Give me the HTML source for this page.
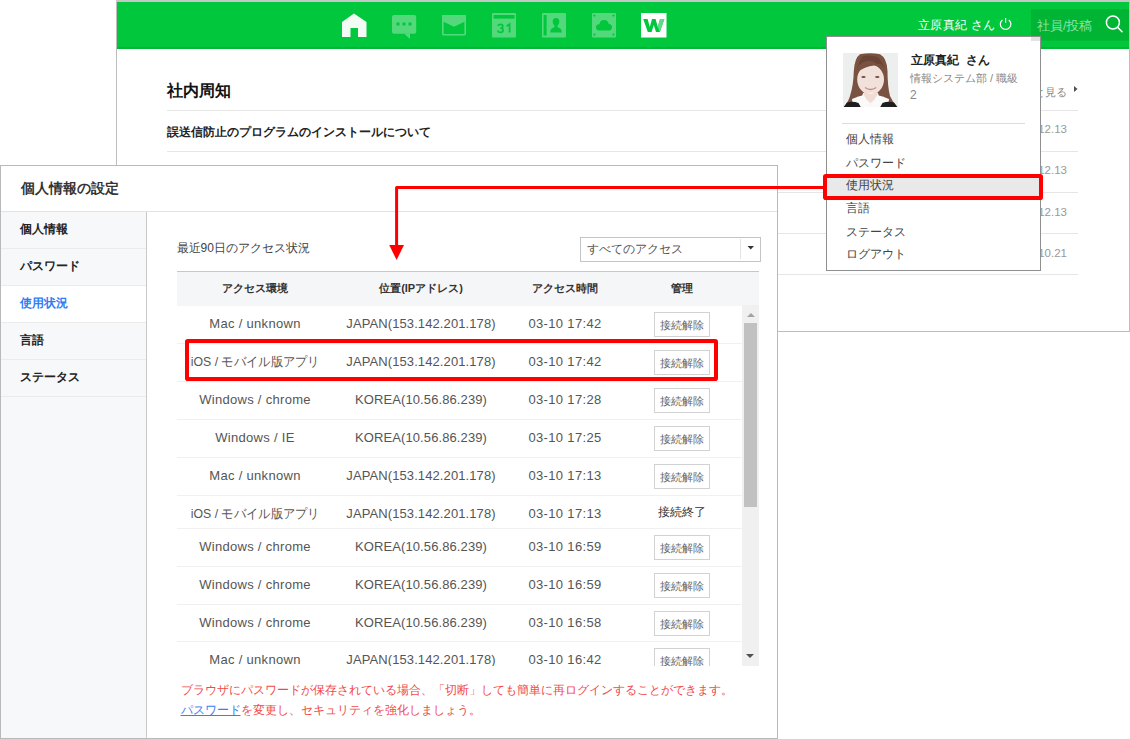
<!DOCTYPE html>
<html><head><meta charset="utf-8">
<style>
html,body{margin:0;padding:0;background:#fff;}
body{width:1130px;height:739px;position:relative;overflow:hidden;font-family:"Liberation Sans",sans-serif;}
.a{position:absolute;}
.t{position:absolute;white-space:nowrap;line-height:1;}
.hl{position:absolute;height:1px;background:#e6e6e6;}
</style></head>
<body>
<!-- ============ BACKGROUND WINDOW ============ -->
<div class="a" style="left:116px;top:0;width:1014px;height:332px;">
  <div class="a" style="left:0;top:0;width:1px;height:332px;background:#bdbdbd"></div>
  <div class="a" style="left:1013px;top:0;width:1px;height:332px;background:#bdbdbd"></div>
  <div class="a" style="left:0;top:0;width:1014px;height:2px;background:#c6c6c6"></div>
  <div class="a" style="left:0;top:331px;width:1014px;height:1px;background:#bdbdbd"></div>
</div>
<!-- green header -->
<div class="a" style="left:117px;top:2px;width:1012px;height:46.5px;background:#00c73c"></div>
<div class="a" style="left:117px;top:47px;width:1012px;height:1.5px;background:#00b836"></div>

<svg class="a" style="left:0;top:0" width="1130" height="50" viewBox="0 0 1130 50">
  <!-- home -->
  <path d="M342 22 L354 13.5 L366.5 22 L366.5 37 L358 37 L358 28 L350.5 28 L350.5 37 L342 37 Z" fill="#f3fbf5"/>
  <!-- chat -->
  <rect x="392" y="15" width="24.2" height="18.8" rx="2" fill="#53d97b"/>
  <path d="M404 33.4 L410 39 L410 33.4 Z" fill="#53d97b"/>
  <rect x="396.5" y="22.5" width="3" height="3" fill="#00c73c"/>
  <rect x="402.5" y="22.5" width="3" height="3" fill="#00c73c"/>
  <rect x="408.5" y="22.5" width="3" height="3" fill="#00c73c"/>
  <!-- mail -->
  <rect x="442.8" y="15.8" width="22.4" height="19" rx="0.8" fill="none" stroke="#53d97b" stroke-width="1.6"/>
  <path d="M442 15 L466 15 L466 21 L454 26.8 L442 21 Z" fill="#53d97b"/>
  <!-- calendar -->
  <rect x="492" y="13" width="24" height="24.5" rx="1" fill="#53d97b"/>
  <rect x="493.6" y="15" width="21" height="3.6" fill="#00c73c"/>
  <path d="M497.9 26 Q498.4 24.3 500.5 24.3 Q502.8 24.3 502.8 26.2 Q502.8 28.1 500.3 28.1 Q503.1 28.1 503.1 30.3 Q503.1 32.4 500.4 32.4 Q498.1 32.4 497.6 30.5" fill="none" stroke="#00c73c" stroke-width="1.7"/><path d="M506.6 26.2 L509.6 24.2 L509.6 32.6" fill="none" stroke="#00c73c" stroke-width="1.8"/>
  <!-- contacts -->
  <rect x="542" y="13" width="24" height="24.5" rx="1" fill="#53d97b"/>
  <rect x="543.6" y="15" width="3" height="20.5" fill="#00c73c"/>
  <ellipse cx="556" cy="21.7" rx="3.3" ry="3.7" fill="#00c73c"/><rect x="554.4" y="24" width="3.2" height="4" fill="#00c73c"/>
  <path d="M550.2 32.6 Q550.2 27.8 555 27.3 L557 27.3 Q561.8 27.8 561.8 32.6 Z" fill="#00c73c"/>
  <!-- drive -->
  <rect x="592" y="13" width="24" height="24.5" rx="1" fill="#53d97b"/>
  <circle cx="594.4" cy="15.6" r="1.1" fill="#00c73c"/>
  <circle cx="613.4" cy="15.6" r="1.1" fill="#00c73c"/>
  <circle cx="594.4" cy="34.6" r="1.1" fill="#00c73c"/>
  <circle cx="613.4" cy="34.6" r="1.1" fill="#00c73c"/>
  <path d="M599 30.4 Q596 30.4 596 27.3 Q596 24.3 599.3 24.3 Q600.2 20 604 20 Q608 20 608.8 24 Q612 24.2 612 27.3 Q612 30.4 609 30.4 Z" fill="#00c73c"/>
  <!-- W -->
  <rect x="641" y="13" width="25.5" height="24.5" fill="#ffffff"/>
  <path d="M643.2 19 L647.6 19 L649.8 27 L652 19 L655.6 19 L657.8 27 L660 19 L664.4 19 L659.8 32 L656 32 L653.8 25 L651.6 32 L647.8 32 Z" fill="#00c73c"/>
  <path d="M657.8 27 L660 19 L664.4 19 L659.8 32 Z" fill="#5fdb86"/>
  <!-- search box -->
  <rect x="1031" y="9" width="98" height="31.6" fill="#00b533"/>
  <circle cx="1112.9" cy="22.5" r="6.5" fill="none" stroke="#ffffff" stroke-width="1.5"/>
  <path d="M1117.6 27.2 L1122 31.7" stroke="#ffffff" stroke-width="1.6" stroke-linecap="round"/>
  <!-- power -->
  <path d="M1002.4 19.9 A5.3 5.3 0 1 0 1008.8 19.9" fill="none" stroke="#ffffff" stroke-width="1.2"/>
  <path d="M1005.6 18 L1005.6 22.8" stroke="#ffffff" stroke-width="1.2"/>
</svg>
<div class="t" style="left:918px;top:18.5px;font-size:12px;letter-spacing:0.3px;color:#fff">立原真紀 さん</div>
<div class="t" style="left:1037px;top:19.5px;font-size:12.5px;color:#8ee3a6">社員/投稿</div>

<!-- background content -->
<div class="t" style="left:166.5px;top:82.5px;font-size:16px;font-weight:bold;color:#111">社内周知</div>
<div class="hl" style="left:167px;top:110px;width:911px;"></div>
<div class="t" style="left:166.5px;top:126px;font-size:12px;font-weight:bold;color:#222">誤送信防止のプログラムのインストールについて</div>
<div class="hl" style="left:167px;top:151px;width:911px;"></div>
<div class="hl" style="left:167px;top:192px;width:911px;"></div>
<div class="hl" style="left:167px;top:233px;width:911px;"></div>
<div class="hl" style="left:167px;top:274px;width:911px;"></div>
<div class="t" style="left:1000px;top:86.8px;width:67px;text-align:right;font-size:11px;color:#888">もっと見る</div>
<svg class="a" style="left:1072px;top:85.2px" width="8" height="8"><path d="M2 1 L5.5 4 L2 7 Z" fill="#505050"/></svg>
<div class="t" style="left:990px;top:124px;width:77px;text-align:right;font-size:11.5px;color:#999">2017.12.13</div>
<div class="t" style="left:990px;top:165px;width:77px;text-align:right;font-size:11.5px;color:#999">2017.12.13</div>
<div class="t" style="left:990px;top:207px;width:77px;text-align:right;font-size:11.5px;color:#999">2017.12.13</div>
<div class="t" style="left:990px;top:248px;width:77px;text-align:right;font-size:11.5px;color:#999">2017.10.21</div>

<!-- ============ DROPDOWN ============ -->
<div class="a" style="left:826px;top:36px;width:213px;height:233px;background:#fff;border:1px solid #8f8f8f;"></div>
<div class="a" style="left:1031px;top:37px;width:9px;height:3.6px;background:#e2e2e2"></div>
<!-- photo -->
<svg class="a" style="left:842.5px;top:52.5px" width="55" height="54.5" viewBox="0 0 55 54.5">
  <rect width="55" height="54.5" fill="#edefee"/>
  <path d="M17 1.2 Q27 -0.5 37 1.2 Q44 5 44.5 18 Q44.5 33 47 43 Q50 50 55 54.5 L0 54.5 Q5 50 7 43 Q10.5 32 10.8 18 Q11.5 5 17 1.2 Z" fill="#7a5241"/>
  <path d="M20 3 Q28 1.5 34 4 Q40 8 41 16 L14.5 16 Q16 7 20 3 Z" fill="#6a4536"/>
  <ellipse cx="27.6" cy="26.5" rx="13.4" ry="15" fill="#f2e1da"/>
  <path d="M13.5 20 Q15 9 24 8 Q31 7.5 34 11 Q38 9.5 41.5 16 Q42 20 41.5 22 Q38 13 31 12.5 Q22 13 13.5 20 Z" fill="#7a5241"/>
  <path d="M16 54.5 L20 40 L35 40 L39 54.5 Z" fill="#f7f7f7"/>
  <path d="M21 38 Q27.6 44 34.5 38 L34.5 44 L27.6 50 L20.5 44 Z" fill="#f0dcd5"/>
  <path d="M9 46 Q16 43 21 42 L27.5 54.5 L10 54.5 Z" fill="#fafafa"/>
  <path d="M46 46 Q39 43 34 42 L27.5 54.5 L45 54.5 Z" fill="#fafafa"/>
  <path d="M0.5 54.5 L4 49.5 Q10 48 15.5 50 L18 54.5 Z" fill="#1e1e1e"/>
  <path d="M54.5 54.5 L51 49.5 Q45 48 39.5 50 L37 54.5 Z" fill="#1e1e1e"/>
  <path d="M22 34.5 Q27.6 38.5 33.2 34.5" fill="none" stroke="#c48a86" stroke-width="1.4"/>
  <ellipse cx="20.5" cy="24" rx="2.2" ry="1" fill="#6b4d43"/>
  <ellipse cx="34.3" cy="24" rx="2.2" ry="1" fill="#6b4d43"/>
</svg>
<div class="t" style="left:910.5px;top:54px;font-size:12px;font-weight:bold;color:#222">立原真紀<span style="display:inline-block;width:7px"></span>さん</div>
<div class="t" style="left:910px;top:73px;font-size:11px;color:#888">情報システム部 / 職級</div>
<div class="t" style="left:910px;top:89px;font-size:12px;color:#888">2</div>
<div class="a" style="left:842px;top:123px;width:183px;height:1px;background:#dcdcdc"></div>
<div class="a" style="left:827px;top:178px;width:212px;height:18px;background:#e9e9e9"></div>
<div class="t" style="left:846px;top:133px;font-size:12px;color:#444">個人情報</div>
<div class="t" style="left:846px;top:156.5px;font-size:12px;color:#444">パスワード</div>
<div class="t" style="left:846px;top:179px;font-size:12px;color:#444">使用状況</div>
<div class="t" style="left:846px;top:202px;font-size:12px;color:#444">言語</div>
<div class="t" style="left:846px;top:225.5px;font-size:12px;color:#444">ステータス</div>
<div class="t" style="left:846px;top:248px;font-size:12px;color:#444">ログアウト</div>

<!-- DIALOG -->
<div class="a" style="left:0;top:165px;width:776px;height:572px;background:#fff;border:1px solid #b9b9b9;"></div>
<div class="t" style="left:20.5px;top:182px;font-size:13.5px;font-weight:bold;color:#333">個人情報の設定</div>
<div class="a" style="left:1px;top:211px;width:776px;height:1px;background:#e3e3e3"></div>
<div class="a" style="left:1px;top:212px;width:145px;height:526px;background:#f7f8fa"></div>
<div class="a" style="left:1px;top:286px;width:145px;height:36px;background:#fff"></div>
<div class="a" style="left:146px;top:212px;width:1px;height:526px;background:#c9c9c9"></div>
<div class="t" style="left:20px;top:223.2px;font-size:12px;font-weight:bold;color:#222">個人情報</div>
<div class="a" style="left:1px;top:248.0px;width:145px;height:1px;background:#ebebeb"></div>
<div class="t" style="left:20px;top:260.2px;font-size:12px;font-weight:bold;color:#222">パスワード</div>
<div class="a" style="left:1px;top:285.0px;width:145px;height:1px;background:#ebebeb"></div>
<div class="t" style="left:20px;top:297.2px;font-size:12px;font-weight:bold;color:#2f7cf6">使用状況</div>
<div class="a" style="left:1px;top:322.0px;width:145px;height:1px;background:#ebebeb"></div>
<div class="t" style="left:20px;top:334.2px;font-size:12px;font-weight:bold;color:#222">言語</div>
<div class="a" style="left:1px;top:359.0px;width:145px;height:1px;background:#ebebeb"></div>
<div class="t" style="left:20px;top:371.2px;font-size:12px;font-weight:bold;color:#222">ステータス</div>
<div class="a" style="left:1px;top:396.0px;width:145px;height:1px;background:#ebebeb"></div>
<div class="t" style="left:176.5px;top:242px;font-size:12px;color:#444">最近90日のアクセス状況</div>
<div class="a" style="left:579.5px;top:237px;width:179.5px;height:23px;border:1px solid #c4c4c4;background:#fff"></div>
<div class="a" style="left:740px;top:239px;width:1px;height:20px;background:#e3e3e3"></div>
<svg class="a" style="left:746px;top:244.8px" width="10" height="6"><path d="M1.5 1 L8 1 L4.75 4.5 Z" fill="#333"/></svg>
<div class="t" style="left:587px;top:243px;font-size:12px;color:#555">すべてのアクセス</div>
<div class="a" style="left:177px;top:271px;width:582px;height:1px;background:#c4c8ce"></div>
<div class="a" style="left:177px;top:272px;width:582px;height:33.5px;background:#f5f6f8"></div>
<div class="t" style="left:177px;top:283px;width:156px;text-align:center;font-size:11px;font-weight:bold;color:#333">アクセス環境</div>
<div class="t" style="left:333px;top:283px;width:176px;text-align:center;font-size:11px;font-weight:bold;color:#333">位置(IPアドレス)</div>
<div class="t" style="left:509px;top:283px;width:112px;text-align:center;font-size:11px;font-weight:bold;color:#333">アクセス時間</div>
<div class="t" style="left:621px;top:283px;width:121px;text-align:center;font-size:11px;font-weight:bold;color:#333">管理</div>
<div class="a" style="left:177px;top:305px;width:582px;height:361px;overflow:hidden">
<div class="t" style="left:0px;top:12.0px;width:156px;text-align:center;font-size:13px;letter-spacing:0.3px;color:#555">Mac / unknown</div>
<div class="t" style="left:156px;top:12.0px;width:176px;text-align:center;font-size:13px;letter-spacing:0.1px;color:#555">JAPAN(153.142.201.178)</div>
<div class="t" style="left:332px;top:12.0px;width:112px;text-align:center;font-size:13px;letter-spacing:0.35px;color:#555">03-10 17:42</div>
<div class="a" style="left:477.4px;top:7.0px;width:54px;height:22.5px;border:1px solid #d2d2d2;background:#fff"></div>
<div class="t" style="left:477.4px;top:14.5px;width:56px;text-align:center;font-size:11px;color:#666">接続解除</div>
<div class="a" style="left:0;top:38px;width:565px;height:1px;background:#f0f0f0"></div>
<div class="t" style="left:0px;top:50.0px;width:156px;text-align:center;font-size:13px;color:#555"><span style="display:inline-block;transform:scaleX(0.945)">iOS / モバイル版アプリ</span></div>
<div class="t" style="left:156px;top:50.0px;width:176px;text-align:center;font-size:13px;letter-spacing:0.1px;color:#555">JAPAN(153.142.201.178)</div>
<div class="t" style="left:332px;top:50.0px;width:112px;text-align:center;font-size:13px;letter-spacing:0.35px;color:#555">03-10 17:42</div>
<div class="a" style="left:477.4px;top:45.0px;width:54px;height:22.5px;border:1px solid #d2d2d2;background:#fff"></div>
<div class="t" style="left:477.4px;top:52.5px;width:56px;text-align:center;font-size:11px;color:#666">接続解除</div>
<div class="a" style="left:0;top:76px;width:565px;height:1px;background:#f0f0f0"></div>
<div class="t" style="left:0px;top:88.0px;width:156px;text-align:center;font-size:13px;letter-spacing:0.3px;color:#555">Windows / chrome</div>
<div class="t" style="left:156px;top:88.0px;width:176px;text-align:center;font-size:13px;letter-spacing:0.1px;color:#555">KOREA(10.56.86.239)</div>
<div class="t" style="left:332px;top:88.0px;width:112px;text-align:center;font-size:13px;letter-spacing:0.35px;color:#555">03-10 17:28</div>
<div class="a" style="left:477.4px;top:83.0px;width:54px;height:22.5px;border:1px solid #d2d2d2;background:#fff"></div>
<div class="t" style="left:477.4px;top:90.5px;width:56px;text-align:center;font-size:11px;color:#666">接続解除</div>
<div class="a" style="left:0;top:114px;width:565px;height:1px;background:#f0f0f0"></div>
<div class="t" style="left:0px;top:126.0px;width:156px;text-align:center;font-size:13px;letter-spacing:0.3px;color:#555">Windows / IE</div>
<div class="t" style="left:156px;top:126.0px;width:176px;text-align:center;font-size:13px;letter-spacing:0.1px;color:#555">KOREA(10.56.86.239)</div>
<div class="t" style="left:332px;top:126.0px;width:112px;text-align:center;font-size:13px;letter-spacing:0.35px;color:#555">03-10 17:25</div>
<div class="a" style="left:477.4px;top:121.0px;width:54px;height:22.5px;border:1px solid #d2d2d2;background:#fff"></div>
<div class="t" style="left:477.4px;top:128.5px;width:56px;text-align:center;font-size:11px;color:#666">接続解除</div>
<div class="a" style="left:0;top:152px;width:565px;height:1px;background:#f0f0f0"></div>
<div class="t" style="left:0px;top:164.0px;width:156px;text-align:center;font-size:13px;letter-spacing:0.3px;color:#555">Mac / unknown</div>
<div class="t" style="left:156px;top:164.0px;width:176px;text-align:center;font-size:13px;letter-spacing:0.1px;color:#555">JAPAN(153.142.201.178)</div>
<div class="t" style="left:332px;top:164.0px;width:112px;text-align:center;font-size:13px;letter-spacing:0.35px;color:#555">03-10 17:13</div>
<div class="a" style="left:477.4px;top:159.0px;width:54px;height:22.5px;border:1px solid #d2d2d2;background:#fff"></div>
<div class="t" style="left:477.4px;top:166.5px;width:56px;text-align:center;font-size:11px;color:#666">接続解除</div>
<div class="a" style="left:0;top:190px;width:565px;height:1px;background:#f0f0f0"></div>
<div class="t" style="left:0px;top:201.5px;width:156px;text-align:center;font-size:13px;color:#555"><span style="display:inline-block;transform:scaleX(0.945)">iOS / モバイル版アプリ</span></div>
<div class="t" style="left:156px;top:201.5px;width:176px;text-align:center;font-size:13px;letter-spacing:0.1px;color:#555">JAPAN(153.142.201.178)</div>
<div class="t" style="left:332px;top:201.5px;width:112px;text-align:center;font-size:13px;letter-spacing:0.35px;color:#555">03-10 17:13</div>
<div class="t" style="left:444px;top:200.5px;width:121px;text-align:center;font-size:12px;color:#333">接続終了</div>
<div class="a" style="left:0;top:223px;width:565px;height:1px;background:#f0f0f0"></div>
<div class="t" style="left:0px;top:235.0px;width:156px;text-align:center;font-size:13px;letter-spacing:0.3px;color:#555">Windows / chrome</div>
<div class="t" style="left:156px;top:235.0px;width:176px;text-align:center;font-size:13px;letter-spacing:0.1px;color:#555">KOREA(10.56.86.239)</div>
<div class="t" style="left:332px;top:235.0px;width:112px;text-align:center;font-size:13px;letter-spacing:0.35px;color:#555">03-10 16:59</div>
<div class="a" style="left:477.4px;top:230.0px;width:54px;height:22.5px;border:1px solid #d2d2d2;background:#fff"></div>
<div class="t" style="left:477.4px;top:237.5px;width:56px;text-align:center;font-size:11px;color:#666">接続解除</div>
<div class="a" style="left:0;top:261px;width:565px;height:1px;background:#f0f0f0"></div>
<div class="t" style="left:0px;top:273.0px;width:156px;text-align:center;font-size:13px;letter-spacing:0.3px;color:#555">Windows / chrome</div>
<div class="t" style="left:156px;top:273.0px;width:176px;text-align:center;font-size:13px;letter-spacing:0.1px;color:#555">KOREA(10.56.86.239)</div>
<div class="t" style="left:332px;top:273.0px;width:112px;text-align:center;font-size:13px;letter-spacing:0.35px;color:#555">03-10 16:59</div>
<div class="a" style="left:477.4px;top:268.0px;width:54px;height:22.5px;border:1px solid #d2d2d2;background:#fff"></div>
<div class="t" style="left:477.4px;top:275.5px;width:56px;text-align:center;font-size:11px;color:#666">接続解除</div>
<div class="a" style="left:0;top:299px;width:565px;height:1px;background:#f0f0f0"></div>
<div class="t" style="left:0px;top:311.0px;width:156px;text-align:center;font-size:13px;letter-spacing:0.3px;color:#555">Windows / chrome</div>
<div class="t" style="left:156px;top:311.0px;width:176px;text-align:center;font-size:13px;letter-spacing:0.1px;color:#555">KOREA(10.56.86.239)</div>
<div class="t" style="left:332px;top:311.0px;width:112px;text-align:center;font-size:13px;letter-spacing:0.35px;color:#555">03-10 16:58</div>
<div class="a" style="left:477.4px;top:306.0px;width:54px;height:22.5px;border:1px solid #d2d2d2;background:#fff"></div>
<div class="t" style="left:477.4px;top:313.5px;width:56px;text-align:center;font-size:11px;color:#666">接続解除</div>
<div class="a" style="left:0;top:336px;width:565px;height:1px;background:#f0f0f0"></div>
<div class="t" style="left:0px;top:348.0px;width:156px;text-align:center;font-size:13px;letter-spacing:0.3px;color:#555">Mac / unknown</div>
<div class="t" style="left:156px;top:348.0px;width:176px;text-align:center;font-size:13px;letter-spacing:0.1px;color:#555">JAPAN(153.142.201.178)</div>
<div class="t" style="left:332px;top:348.0px;width:112px;text-align:center;font-size:13px;letter-spacing:0.35px;color:#555">03-10 16:42</div>
<div class="a" style="left:477.4px;top:343.0px;width:54px;height:22.5px;border:1px solid #d2d2d2;background:#fff"></div>
<div class="t" style="left:477.4px;top:350.5px;width:56px;text-align:center;font-size:11px;color:#666">接続解除</div>
<div class="a" style="left:565.3px;top:0;width:16.7px;height:361px;background:#f0f0f0"></div>
<svg class="a" style="left:568px;top:5.5px" width="12" height="8"><path d="M2 6 L6 2 L10 6 Z" fill="#a3a3a3"/></svg>
<div class="a" style="left:567px;top:17.5px;width:13px;height:184.5px;background:#c1c1c1"></div>
<svg class="a" style="left:567px;top:346.5px" width="12" height="8"><path d="M2 2 L10 2 L6 6 Z" fill="#505050"/></svg>
</div>
<div class="t" style="left:180.5px;top:684px;font-size:12px;color:#f24a4a">ブラウザにパスワードが保存されている場合、「切断」しても簡単に再ログインすることができます。</div>
<div class="t" style="left:180.5px;top:703.5px;font-size:12px;color:#f24a4a"><span style="color:#3a7ef0;text-decoration:underline">パスワード</span>を変更し、セキュリティを強化しましょう。</div>
<svg class="a" style="left:0;top:0" width="1130" height="739" viewBox="0 0 1130 739"><rect x="825" y="176" width="216" height="22" rx="0.8" fill="none" stroke="#ff0000" stroke-width="4"/><rect x="187" y="341" width="529" height="38" rx="0.8" fill="none" stroke="#ff0000" stroke-width="4"/><path d="M825 187.5 L396.6 187.5 L396.6 247" fill="none" stroke="#ff0000" stroke-width="3" stroke-linejoin="round"/><path d="M389.2 245 L404 245 L396.6 260 Z" fill="#ff0000"/></svg>
</body></html>
